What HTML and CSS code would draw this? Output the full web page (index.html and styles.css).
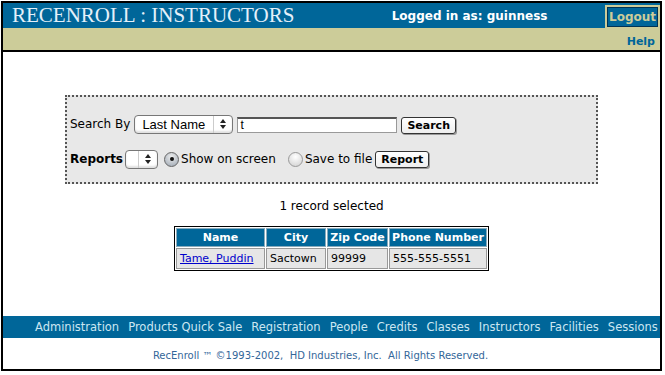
FILE: index.html
```html
<!DOCTYPE html>
<html>
<head>
<meta charset="utf-8">
<link rel="stylesheet" href="styles.css">
</head>
<body>
<div class="frame">
  <div class="topbar">
    <div class="title">RECENROLL : INSTRUCTORS</div>
    <div class="logged">Logged in as: guinness</div>
    <span class="logout">Logout</span>
  </div>
  <div class="subbar"><a class="help">Help</a></div>
  <div class="main">
    <div class="panel">
      <div class="row row1">
        <span class="lbl">Search By</span>
        <span class="sel sel-name"><span class="seltext">Last Name</span><span class="arrows"><svg width="8" height="12" viewBox="0 0 8 12"><path d="M4 1 L7 5 L1 5 Z M4 11 L7 7 L1 7 Z" fill="#222"/></svg></span></span>
        <span class="txt">t</span>
        <span class="btn btn-search">Search</span>
      </div>
      <div class="row row2">
        <span class="lbl b">Reports</span>
        <span class="sel sel-rep"><span class="seltext"></span><span class="arrows"><svg width="8" height="12" viewBox="0 0 8 12"><path d="M4 1 L7 5 L1 5 Z M4 11 L7 7 L1 7 Z" fill="#222"/></svg></span></span>
        <span class="radio on"><span class="dot"></span></span><span class="rlbl">Show on screen</span>
        <span class="radio r2"></span><span class="rlbl">Save to file</span>
        <span class="btn btn-report">Report</span>
      </div>
    </div>
    <div class="count">1 record selected</div>
    <table class="results">
      <tr><th class="c1">Name</th><th class="c2">City</th><th class="c3">Zip Code</th><th class="c4">Phone Number</th></tr>
      <tr><td><a class="rec">Tame, Puddin</a></td><td>Sactown</td><td>99999</td><td>555-555-5551</td></tr>
    </table>
  </div>
  <div class="navbar">
    <a>Administration</a><a>Products Quick Sale</a><a>Registration</a><a>People</a><a>Credits</a><a>Classes</a><a>Instructors</a><a>Facilities</a><a>Sessions</a>
  </div>
  <div class="copy">RecEnroll ™ ©1993-2002,&nbsp; HD Industries, Inc.&nbsp; All Rights Reserved.</div>
</div>
</body>
</html>
```
FILE: styles.css
```css
html, body { margin: 0; padding: 0; background: #fff; }
body { font-family: "DejaVu Sans", Verdana, sans-serif; }
.frame {
  margin: 1px 0 0 1px;
  width: 657px;
  height: 366px;
  border: 2px solid #000;
  display: flex;
  flex-direction: column;
  overflow: hidden;
  background: #fff;
}
.topbar {
  background: #006699;
  height: 25px;
  display: flex;
  align-items: center;
  flex: none;
}
.title {
  font-family: "Liberation Serif", "Times New Roman", serif;
  font-size: 21px;
  color: #e4f0fa;
  padding-left: 9px;
  width: 381px;
  white-space: nowrap;
}
.logged {
  color: #fff;
  font-weight: bold;
  font-size: 12px;
  width: 214px;
}
.logout {
  font-weight: bold;
  font-size: 12px;
  color: #cccc99;
  border: 2px solid #cccc99;
  box-shadow: inset 0 0 0 1px #003355;
  padding: 3px 2px 3px 2px;
  line-height: 14px;
  margin-top: 3px;
}
.subbar {
  background: #cccc99;
  height: 22px;
  border-bottom: 2px solid #000;
  display: flex;
  justify-content: flex-end;
  align-items: center;
  flex: none;
}
.help {
  color: #006699;
  font-weight: bold;
  font-size: 11px;
  padding-right: 5px;
  padding-top: 4px;
}
.main {
  flex: 1;
  display: flex;
  flex-direction: column;
  align-items: center;
}
.panel {
  margin-top: 43px;
  width: 526px;
  height: 85px;
  border: 2px dotted #555;
  background: #e8e8e8;
  box-sizing: content-box;
  padding: 0 0 0 3px;
  font-size: 12px;
  color: #000;
}
.row { display: flex; align-items: center; }
.row1 { margin-top: 17px; height: 20px; }
.row2 { margin-top: 15px; height: 20px; }
.lbl { margin-right: 4px; }
.lbl.b { margin-right: 2px; font-weight: bold; }
.sel {
  display: inline-flex;
  align-items: center;
  height: 17px;
  border: 1px solid #777;
  border-radius: 4px;
  background: #fff;
  box-shadow: inset 0 -2px 2px #e0e0e0;
  font-family: "Liberation Sans", Arial, sans-serif;
  font-size: 13px;
}
.sel-name { width: 97px; }
.sel-rep { width: 31px; margin-right: 6px; }
.seltext { flex: 1; padding-left: 7px; }
.arrows {
  width: 18px;
  height: 100%;
  display: flex;
  align-items: center;
  justify-content: center;
  border-left: 1px solid #ccc;
}
.txt {
  margin-left: 4px;
  width: 156px;
  height: 13px;
  border: 1px solid #999;
  border-top: 2px solid #555;
  background: #fff;
  font-family: "Liberation Sans", Arial, sans-serif;
  font-size: 12px;
  line-height: 13px;
  padding-left: 2px;
  margin-top: 2px;
}
.btn {
  display: inline-block;
  font-weight: bold;
  font-size: 11px;
  border: 1px solid #333;
  border-radius: 3px;
  background: linear-gradient(#fff, #eee);
  box-shadow: 1px 1px 0 #999;
  padding: 1px 5px 1px 5px;
  line-height: 13px;
}
.btn-search { margin-left: 4px; margin-top: 2px; }
.btn-report { margin-left: 3px; }
.radio {
  width: 13px;
  height: 13px;
  border-radius: 50%;
  border: 1px solid #999;
  background: radial-gradient(circle at 50% 30%, #fff, #cfcfcf);
  display: inline-flex;
  align-items: center;
  justify-content: center;
  margin-right: 2px;
}
.radio.on { background: radial-gradient(circle at 50% 30%, #eee, #9aa4b0); border-color: #666; }
.dot { width: 4px; height: 4px; border-radius: 50%; background: #111; }
.r2 { margin-left: 12px; }
.rlbl { font-size: 12px; }
.count {
  margin-top: 15px;
  font-size: 12px;
  height: 15px;
  line-height: 15px;
}
.results {
  margin-top: 12px;
  border: 1px solid #000;
  border-spacing: 1px;
  background: #fff;
  font-size: 11px;
  white-space: nowrap;
}
.results th {
  box-sizing: border-box;
  background: #006699;
  color: #fff;
  font-weight: bold;
  height: 19px;
  padding: 0 2px;
  border: 1px solid #8ab;
}
.results td {
  background: #e6e6e6;
  height: 21px;
  padding: 0 3px;
  border: 1px solid #999;
  text-align: left;
  box-sizing: border-box;
}
.c1 { width: 89px; }
.c2 { width: 60px; }
.c3 { width: 61px; }
.c4 { width: 98px; }
.rec { color: #0000cc; text-decoration: underline; }
.navbar {
  background: #006699;
  height: 22px;
  flex: none;
  display: flex;
  align-items: center;
  padding-left: 32px;
  white-space: nowrap;
  font-size: 11.5px;
}
.navbar a { color: #cce6f2; margin-right: 9px; flex: none; }
.copy {
  flex: none;
  height: 31px;
  display: flex;
  align-items: center;
  justify-content: center;
  font-family: "DejaVu Sans", Tahoma, sans-serif;
  font-size: 10px;
  color: #336699;
  padding: 4px 22px 0 0;
  box-sizing: border-box;
}
```
